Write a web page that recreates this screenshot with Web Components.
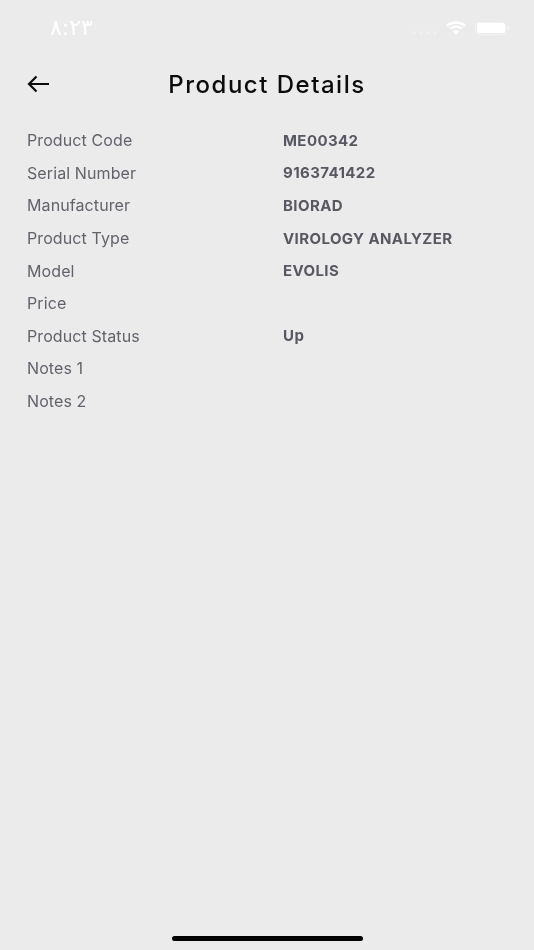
<!DOCTYPE html>
<html>
<head>
<meta charset="utf-8">
<title>Product Details</title>
<style>
    html, body {
        margin: 0;
        height: 100%;
        background: #ebebeb;
    }
</style>
</head>
<body>
<product-screen>
    <status-bar slot="status" time="۸:۲۳"></status-bar>
    <page-header slot="header">Product Details</page-header>
    <detail-row label="Product Code">ME00342</detail-row>
    <detail-row label="Serial Number">9163741422</detail-row>
    <detail-row label="Manufacturer">BIORAD</detail-row>
    <detail-row label="Product Type">VIROLOGY ANALYZER</detail-row>
    <detail-row label="Model">EVOLIS</detail-row>
    <detail-row label="Price"></detail-row>
    <detail-row label="Product Status">Up</detail-row>
    <detail-row label="Notes 1"></detail-row>
    <detail-row label="Notes 2"></detail-row>
</product-screen>

<script>
const screenTemplate = document.createElement('template');
screenTemplate.innerHTML = `
<style>
    :host {
        display: flex;
        flex-direction: column;
        height: 950px;
        width: 534px;
        overflow: hidden;
        background: #ebebeb;
        font-family: Inter, "Liberation Sans", sans-serif;
        filter: blur(0.35px);
    }

    main {
        flex: 1;
        display: flex;
        flex-direction: column;
        padding: 12px 0 0 27px;
    }

    footer {
        display: flex;
        justify-content: center;
        padding-bottom: 9px;
    }

    .home {
        width: 191px;
        height: 5px;
        border-radius: 3px;
        background: #000;
    }
</style>
<slot name="status"></slot>
<slot name="header"></slot>
<main><slot></slot></main>
<footer><div class="home"></div></footer>
`;

class ProductScreen extends HTMLElement {
    constructor() {
        super();
        this.attachShadow({ mode: 'open' }).appendChild(screenTemplate.content.cloneNode(true));
    }
}

const statusTemplate = document.createElement('template');
statusTemplate.innerHTML = `
<style>
    :host {
        display: flex;
        align-items: center;
        justify-content: space-between;
        height: 56px;
        padding: 0 25px 0 50px;
        color: #fff;
    }

    #time {
        margin-top: -2px;
        font: 500 22px "DejaVu Sans", sans-serif;
    }

    .icons {
        display: flex;
        align-items: center;
        gap: 8px;
    }

    .dots {
        display: flex;
        gap: 3px;
        margin: 9px 0 0 0;
    }

    .dots i {
        width: 4px;
        height: 4px;
        border-radius: 50%;
        background: #f1f1f1;
    }

    .battery {
        display: flex;
        align-items: center;
        gap: 1px;
    }

    .cell {
        box-sizing: border-box;
        width: 31px;
        height: 13px;
        padding: 0.5px;
        border: 1.5px solid #f3f3f3;
        border-radius: 4px;
    }

    .cell div {
        height: 100%;
        border-radius: 2px;
        background: #fff;
    }

    .cap {
        width: 2px;
        height: 4px;
        background: #f3f3f3;
    }
</style>
<span id="time" dir="ltr"></span>
<div class="icons">
    <div class="dots"><i></i><i></i><i></i><i></i></div>
    <svg width="22" height="14" viewBox="0 0 23 16" preserveAspectRatio="none" fill="#fff">
        <path d="M11.5 3.2c3.3 0 6.3 1.3 8.6 3.4l1.9-2C19.200 2 15.500.4 11.500.4S3.800 2 1 4.600l1.900 2c2.300-2.100 5.300-3.400 8.600-3.400z"/>
        <path d="M11.500 7.800c2 0 3.800.8 5.200 2l1.900-2c-1.900-1.700-4.400-2.800-7.100-2.800S6.300 6.100 4.400 7.800l1.900 2c1.400-1.200 3.200-2 5.200-2z"/>
        <path d="M11.500 15.600l3.500-3.800c-.9-.8-2.100-1.300-3.500-1.300s-2.600.5-3.500 1.300z"/>
    </svg>
    <div class="battery"><div class="cell"><div></div></div><div class="cap"></div></div>
</div>
`;

class StatusBar extends HTMLElement {
    constructor() {
        super();
        this.attachShadow({ mode: 'open' }).appendChild(statusTemplate.content.cloneNode(true));
    }

    connectedCallback() {
        this.shadowRoot.getElementById('time').textContent = this.getAttribute('time');
    }
}

const headerTemplate = document.createElement('template');
headerTemplate.innerHTML = `
<style>
    :host {
        display: grid;
        grid-template-columns: 1fr auto 1fr;
        align-items: center;
        height: 56px;
        padding: 0 27px;
        color: #0b0b0b;
    }

    button {
        justify-self: start;
        display: flex;
        padding: 0;
        border: none;
        background: none;
        cursor: pointer;
    }

    h1 {
        margin: 0;
        font-size: 24px;
        font-weight: 500;
        letter-spacing: 1.5px;
    }
</style>
<button aria-label="Back">
    <svg width="22" height="18" viewBox="0 0 22 18" fill="none" stroke="#0b0b0b" stroke-width="2.2">
        <path d="M22 9H2M9.500 1.500L2 9l7.500 7.500"/>
    </svg>
</button>
<h1><slot></slot></h1>
<span></span>
`;

class PageHeader extends HTMLElement {
    constructor() {
        super();
        this.attachShadow({ mode: 'open' }).appendChild(headerTemplate.content.cloneNode(true));
    }
}

const rowTemplate = document.createElement('template');
rowTemplate.innerHTML = `
<style>
    :host {
        display: grid;
        grid-template-columns: 256px 1fr;
        align-items: center;
        height: 32.6px;
        font-size: 15px;
        color: #62626c;
    }

    #label {
        font-size: 16px;
        letter-spacing: 0.1px;
    }

    #value {
        font-weight: 700;
        color: #585862;
        letter-spacing: 0.4px;
    }
</style>
<span id="label"></span>
<span id="value"><slot></slot></span>
`;

class DetailRow extends HTMLElement {
    constructor() {
        super();
        this.attachShadow({ mode: 'open' }).appendChild(rowTemplate.content.cloneNode(true));
    }

    connectedCallback() {
        this.shadowRoot.getElementById('label').textContent = this.getAttribute('label');
    }
}

window.customElements.define('product-screen', ProductScreen);
window.customElements.define('status-bar', StatusBar);
window.customElements.define('page-header', PageHeader);
window.customElements.define('detail-row', DetailRow);
</script>
</body>
</html>
